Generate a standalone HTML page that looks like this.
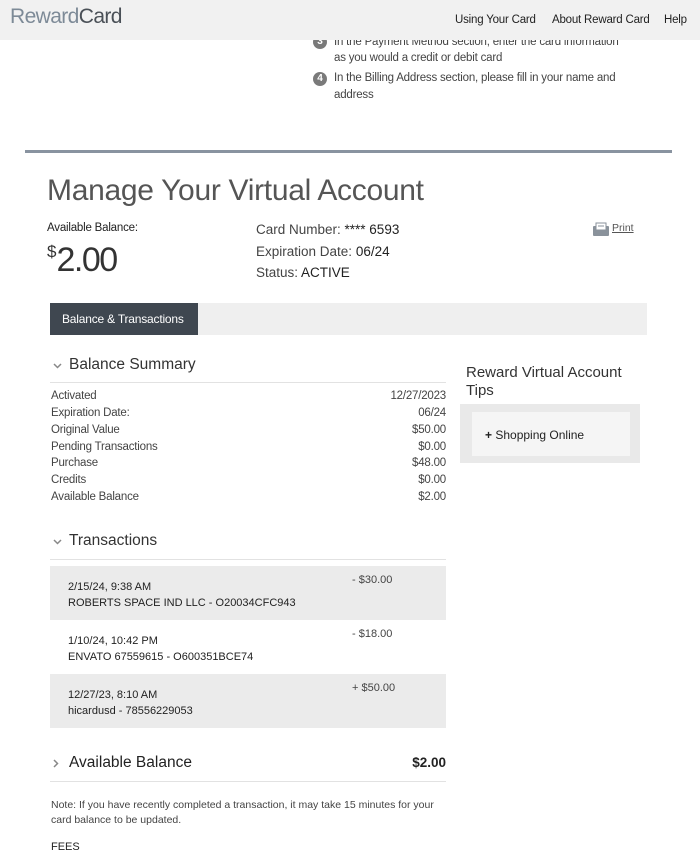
<!DOCTYPE html>
<html><head><meta charset="utf-8"><style>
*{margin:0;padding:0;box-sizing:border-box}
body{width:700px;height:853px;overflow:hidden;background:#fff;font-family:"Liberation Sans",sans-serif;color:#333;position:relative}
.a{position:absolute;white-space:nowrap}
.s12{font-size:11.5px;letter-spacing:-0.2px}
.row{position:absolute;left:51px;width:395px;font-size:11.5px;color:#444;letter-spacing:-0.2px}
.row span{position:absolute;right:0}
.circ{position:absolute;width:14px;height:14px;border-radius:50%;background:#7a7a7a;color:#fff;font-size:10px;font-weight:bold;text-align:center;line-height:14px}
.tx{position:absolute;left:50px;width:396px;height:54px}
.tx .d{position:absolute;left:18px;top:13px;font-size:11px;color:#222;line-height:16px}
.tx .m{position:absolute;left:302px;top:8px;font-size:11px;color:#444}
</style></head><body>
<div class="circ" style="left:313px;top:35px">3</div>
<div class="a s12" style="left:334px;top:36px;color:#444">In the Payment Method section, enter the card information</div>
<div class="a s12" style="left:334px;top:52px;color:#444">as you would a credit or debit card</div>
<div class="circ" style="left:313px;top:72px">4</div>
<div class="a s12" style="left:334px;top:72px;color:#444">In the Billing Address section, please fill in your name and</div>
<div class="a s12" style="left:334px;top:89px;color:#444">address</div>

<div class="a" style="left:0;top:0;width:700px;height:40px;background:#f1f1f1"></div>
<div class="a" style="left:10px;top:5px;font-size:21px;letter-spacing:-0.6px"><span style="color:#7d8a97">Reward</span><span style="color:#4a5057">Card</span></div>
<div class="a s12" style="left:455px;top:14px;color:#222">Using Your Card</div>
<div class="a s12" style="left:552px;top:14px;color:#222">About Reward Card</div>
<div class="a s12" style="left:664px;top:14px;color:#222">Help</div>

<div class="a" style="left:25px;top:150px;width:647px;height:3px;background:#8993a0"></div>
<div class="a" style="left:47px;top:174px;font-size:30px;font-weight:300;color:#555;letter-spacing:-0.3px">Manage Your Virtual Account</div>
<div class="a s12" style="left:47px;top:222px;color:#222">Available Balance:</div>
<div class="a" style="left:47px;top:241px;color:#333"><span style="font-size:17px;vertical-align:14px">$</span><span style="font-size:34px;letter-spacing:-1.5px">2.00</span></div>
<div class="a" style="left:256px;top:222px;font-size:13.5px;color:#444">Card Number: <b style="color:#222;font-weight:normal">**** 6593</b></div>
<div class="a" style="left:256px;top:244px;font-size:13.5px;color:#444">Expiration Date: <span style="color:#222">06/24</span></div>
<div class="a" style="left:256px;top:265px;font-size:13.5px;color:#444">Status: <span style="color:#222">ACTIVE</span></div>
<svg class="a" style="left:593px;top:222px" width="16" height="14" viewBox="0 0 16 14"><rect x="0" y="4" width="16" height="10" rx="1" fill="#8a929b"/><rect x="3" y="1" width="10" height="7" fill="#fff" stroke="#8a929b"/><line x1="5" y1="4" x2="11" y2="4" stroke="#8a929b"/></svg>
<div class="a" style="left:612px;top:222px;font-size:10.5px;color:#555;text-decoration:underline">Print</div>

<div class="a" style="left:50px;top:303px;width:597px;height:32px;background:#efefef"></div>
<div class="a" style="left:50px;top:303px;width:148px;height:32px;background:#3f4750;color:#fff;font-size:12px;line-height:32px;padding-left:12px;letter-spacing:-0.2px">Balance &amp; Transactions</div>

<svg class="a" style="left:53px;top:363px" width="9" height="6"><path d="M1 1L4.5 4.5L8 1" stroke="#888" stroke-width="1.5" fill="none"/></svg>
<div class="a" style="left:69px;top:356px;font-size:15.5px;color:#333">Balance Summary</div>
<div class="a" style="left:50px;top:382px;width:396px;height:1px;background:#e2e2e2"></div>
<div class="row" style="top:390px">Activated<span>12/27/2023</span></div>
<div class="row" style="top:407px">Expiration Date:<span>06/24</span></div>
<div class="row" style="top:424px">Original Value<span>$50.00</span></div>
<div class="row" style="top:441px">Pending Transactions<span>$0.00</span></div>
<div class="row" style="top:457px">Purchase<span>$48.00</span></div>
<div class="row" style="top:474px">Credits<span>$0.00</span></div>
<div class="row" style="top:491px">Available Balance<span>$2.00</span></div>

<div class="a" style="left:466px;top:364px;font-size:15px;color:#333;line-height:18px">Reward Virtual Account<br>Tips</div>
<div class="a" style="left:460px;top:404px;width:180px;height:59px;background:#e9e9e9"></div>
<div class="a" style="left:472px;top:412px;width:158px;height:44px;background:#f5f5f5"></div>
<div class="a" style="left:485px;top:428px;font-size:12px;color:#222"><b>+</b> Shopping Online</div>

<svg class="a" style="left:53px;top:539px" width="9" height="6"><path d="M1 1L4.5 4.5L8 1" stroke="#888" stroke-width="1.5" fill="none"/></svg>
<div class="a" style="left:69px;top:532px;font-size:15.5px;color:#333">Transactions</div>
<div class="a" style="left:50px;top:559px;width:396px;height:1px;background:#e2e2e2"></div>
<div class="tx" style="top:566px;background:#ebebeb"><div class="d">2/15/24, 9:38 AM<br>ROBERTS SPACE IND LLC - O20034CFC943</div><div class="m">- $30.00</div></div>
<div class="tx" style="top:620px"><div class="d">1/10/24, 10:42 PM<br>ENVATO 67559615 - O600351BCE74</div><div class="m">- $18.00</div></div>
<div class="tx" style="top:674px;background:#ebebeb"><div class="d">12/27/23, 8:10 AM<br>hicardusd - 78556229053</div><div class="m">+ $50.00</div></div>

<svg class="a" style="left:53px;top:759px" width="6" height="9"><path d="M1 1L4.5 4.5L1 8" stroke="#888" stroke-width="1.5" fill="none"/></svg>
<div class="a" style="left:69px;top:754px;font-size:15.5px;color:#222">Available Balance</div>
<div class="a" style="left:400px;top:755px;width:46px;text-align:right;font-size:13.5px;font-weight:bold;color:#222">$2.00</div>
<div class="a" style="left:50px;top:781px;width:396px;height:1px;background:#e2e2e2"></div>
<div class="a" style="left:51px;top:798px;font-size:10.5px;color:#444;line-height:15px">Note: If you have recently completed a transaction, it may take 15 minutes for your<br>card balance to be updated.</div>
<div class="a" style="left:51px;top:841px;font-size:11px;color:#222">FEES</div>
</body></html>
